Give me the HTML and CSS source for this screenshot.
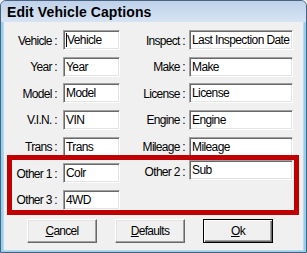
FILE: index.html
```html
<!DOCTYPE html>
<html>
<head>
<meta charset="utf-8">
<title>Edit Vehicle Captions</title>
<link rel="stylesheet" href="styles.css">
</head>
<body>
<div class="window">
  <div class="titlebar">Edit Vehicle Captions</div>
  <div class="client">
    <div class="grid">
      <div class="lbl">Vehicle :</div><div class="field"><span class="caret"></span>Vehicle</div>
      <div class="lbl lbl-r">Inspect :</div><div class="field">Last Inspection Date</div>

      <div class="lbl">Year :</div><div class="field">Year</div>
      <div class="lbl lbl-r">Make :</div><div class="field">Make</div>

      <div class="lbl">Model :</div><div class="field">Model</div>
      <div class="lbl lbl-r">License :</div><div class="field">License</div>

      <div class="lbl">V.I.N. :</div><div class="field">VIN</div>
      <div class="lbl lbl-r">Engine :</div><div class="field">Engine</div>

      <div class="lbl">Trans :</div><div class="field">Trans</div>
      <div class="lbl lbl-r">Mileage :</div><div class="field">Mileage</div>

      <div class="lbl">Other 1 :</div><div class="field">Colr</div>
      <div class="lbl lbl-r raised">Other 2 :</div><div class="field raised">Sub</div>

      <div class="lbl">Other 3 :</div><div class="field">4WD</div>
    </div>
    <div class="buttons">
      <div class="btn"><u>C</u>ancel</div>
      <div class="btn"><u>D</u>efaults</div>
      <div class="btn btn-default"><u>O</u>k</div>
    </div>
  </div>
  <div class="highlight"></div>
</div>
</body>
</html>
```

FILE: styles.css
```css
* { box-sizing: border-box; }
html, body { margin: 0; padding: 0; }
body {
  width: 307px;
  height: 253px;
  overflow: hidden;
  font-family: "Liberation Sans", Arial, sans-serif;
  font-size: 12px;
  letter-spacing: -0.7px;
  color: #000;
  background: #f0f0f0;
}
.window {
  position: relative;
  width: 307px;
  height: 253px;
  display: flex;
  flex-direction: column;
  background: #8fd3f3;
  border: 1px solid #4a6381;
  border-radius: 6px 6px 0 0;
  overflow: hidden;
}
.titlebar {
  height: 21px;
  padding: 3px 0 0 6px;
  background: linear-gradient(#bfd2ea, #d6e3f3);
  font-size: 14px;
  font-weight: bold;
  line-height: 16px;
  letter-spacing: 0.1px;
  color: #000;
}
.client {
  flex: 1;
  margin: 0 2px 1px 2px;
  background: #f0f0f0;
  border-left: 1px solid #c5d4e6;
  border-right: 1px solid #c5d4e6;
  border-bottom: 1px solid #c5d4e6;
  padding-top: 8px;
}
.grid {
  display: grid;
  grid-template-columns: 59px 57px 69px 104px;
  grid-auto-rows: 20px;
  row-gap: 6.667px;
}
.lbl {
  display: flex;
  align-items: center;
  justify-content: flex-end;
  padding: 1px 6px 0 0;
  white-space: nowrap;
}
.lbl-r { padding-right: 4px; }
.raised { margin-top: -3px; }
.field {
  height: 20px;
  padding: 1px 0 0 2px;
  line-height: 16px;
  letter-spacing: -0.6px;
  background: #fff;
  border-top: 1px solid #a0a0a0;
  border-left: 1px solid #a0a0a0;
  border-right: 1px solid #fff;
  border-bottom: 1px solid #fff;
  box-shadow: inset 1px 1px 0 #696969, inset -1px -1px 0 #e3e3e3;
  white-space: nowrap;
  overflow: hidden;
}
.caret {
  display: inline-block;
  width: 1px;
  height: 14px;
  vertical-align: -3px;
  background: #000;
}
.buttons {
  display: flex;
  gap: 18px;
  padding-left: 23px;
  margin-top: 9px;
}
.btn {
  width: 70px;
  height: 24px;
  display: flex;
  align-items: center;
  justify-content: center;
  background: #f0f0f0;
  border-top: 1px solid #fff;
  border-left: 1px solid #fff;
  border-right: 1px solid #696969;
  border-bottom: 1px solid #696969;
  box-shadow: inset -1px -1px 0 #a0a0a0, inset 1px 1px 0 #e3e3e3;
  padding-top: 1px;
}
.btn-default {
  border: 1px solid #000;
  box-shadow: inset 1px 1px 0 #fff, inset -1px -1px 0 #696969, inset -2px -2px 0 #a0a0a0;
}
.highlight {
  position: absolute;
  left: 6px;
  top: 154px;
  width: 292px;
  height: 60px;
  border: 5px solid #c00000;
}
```
